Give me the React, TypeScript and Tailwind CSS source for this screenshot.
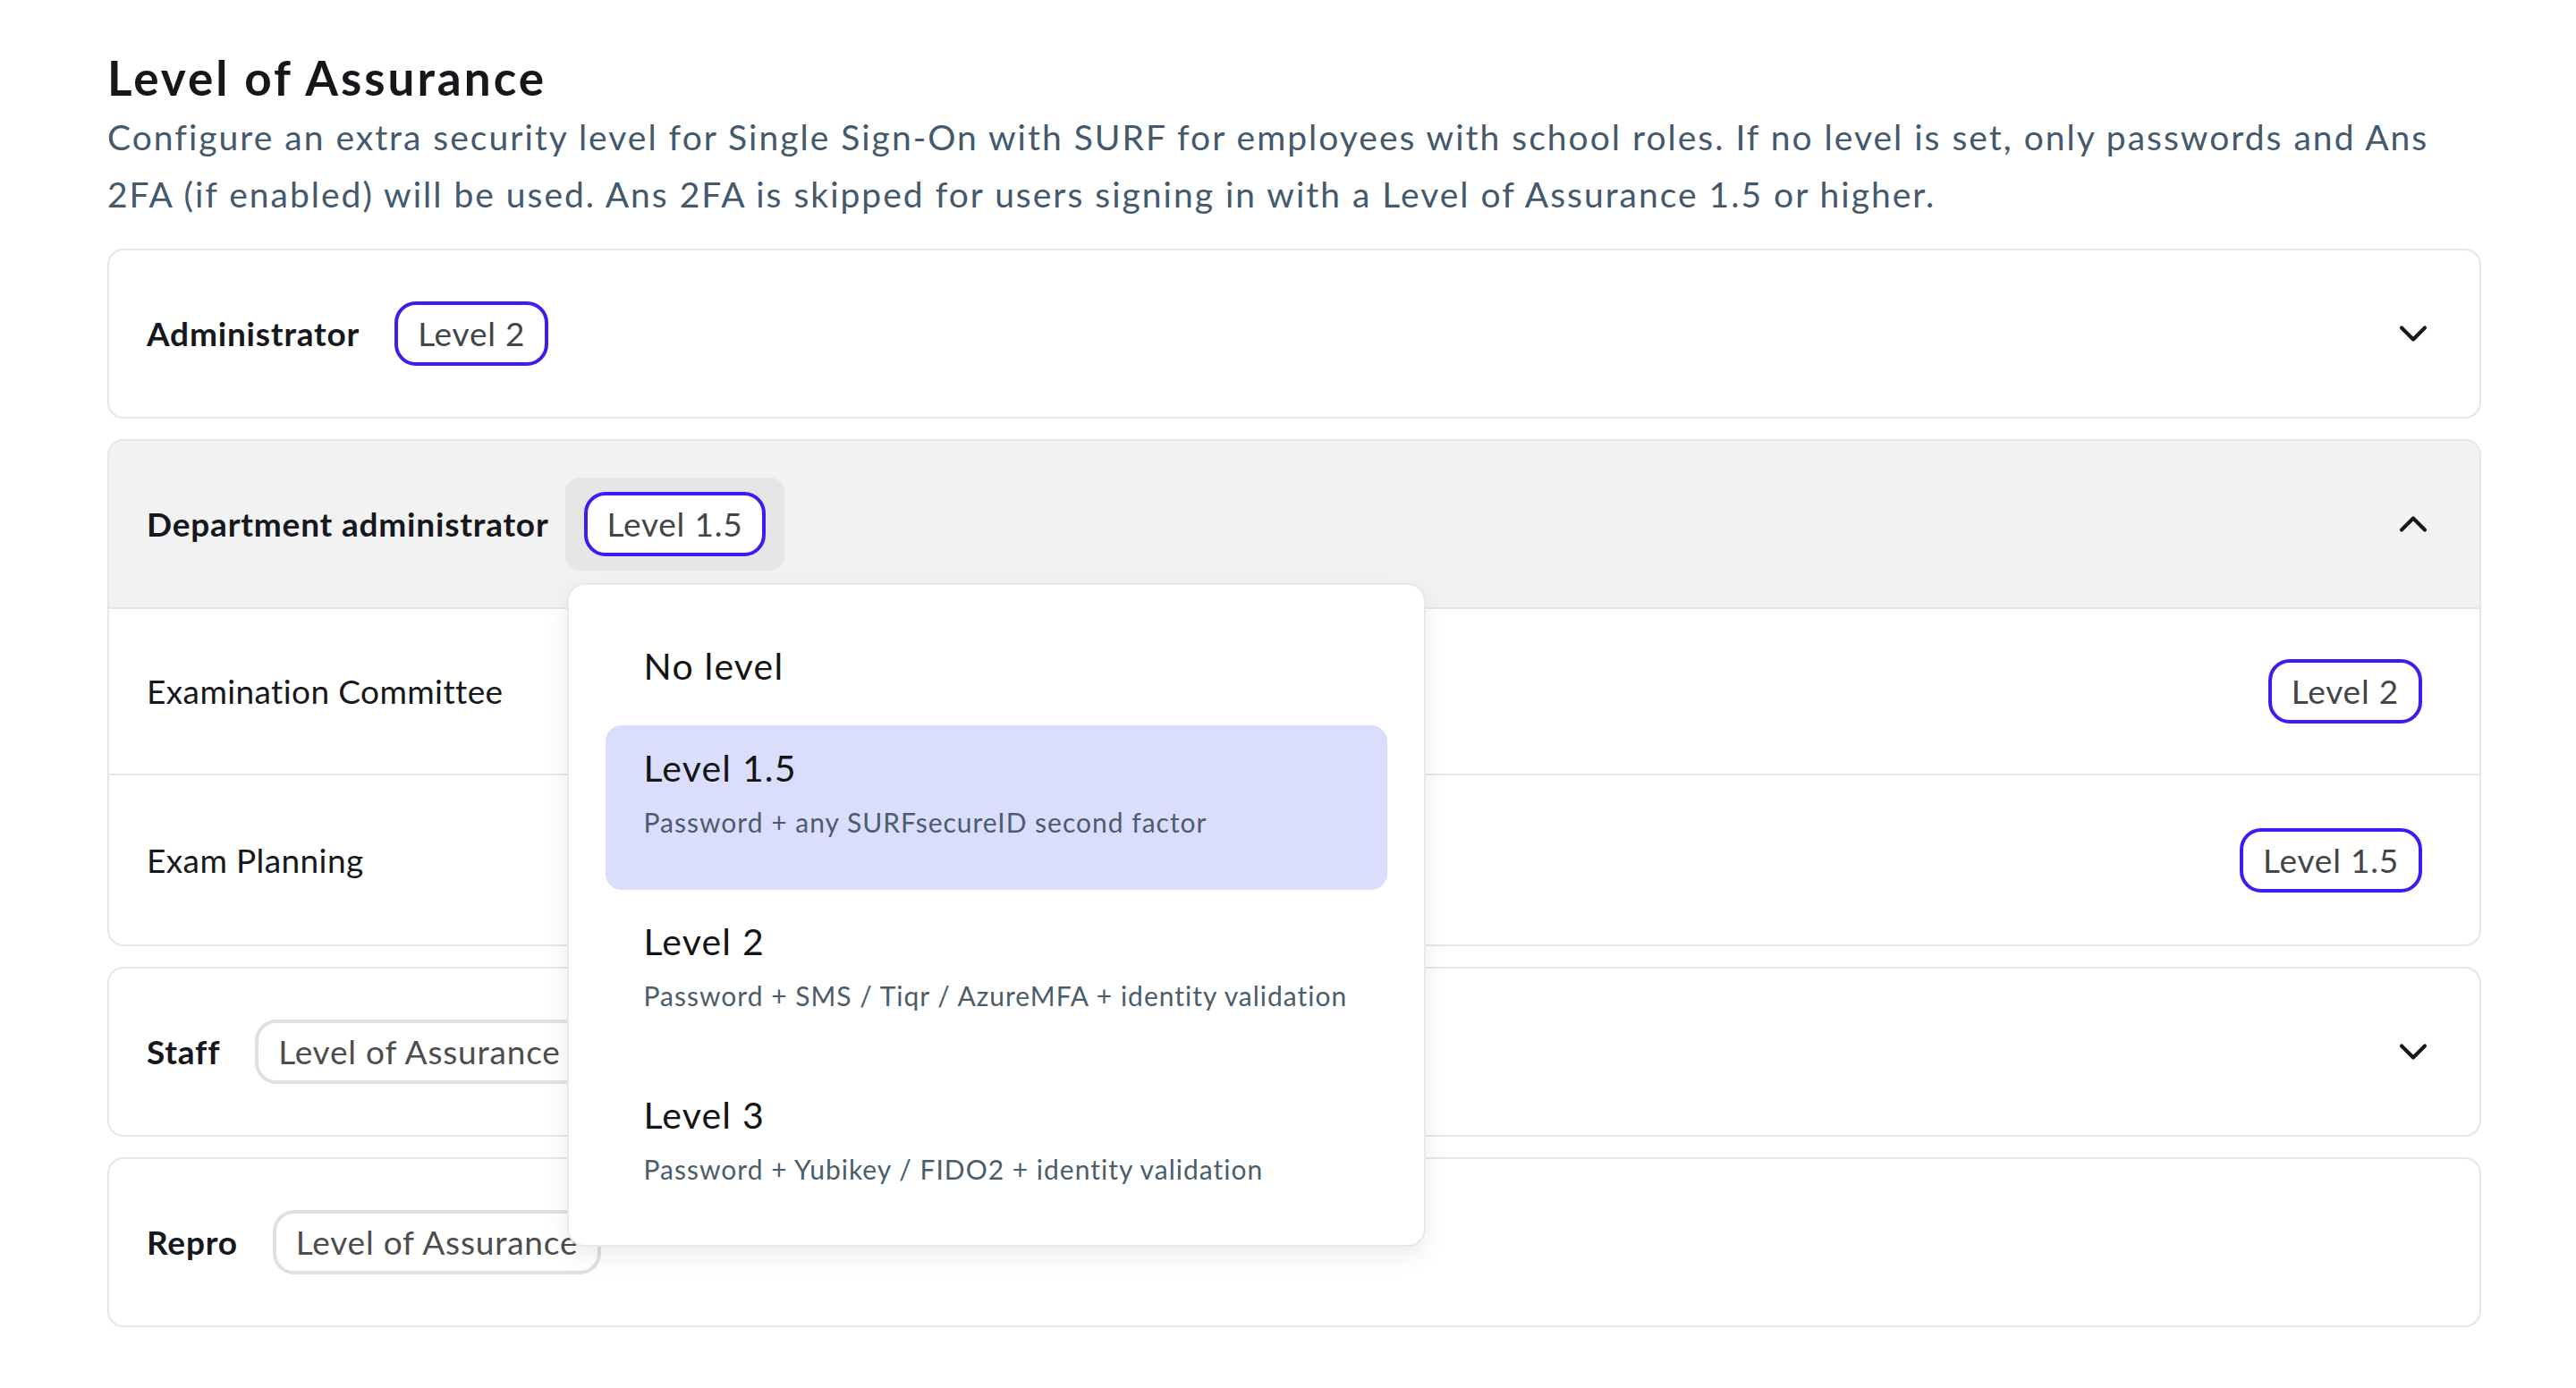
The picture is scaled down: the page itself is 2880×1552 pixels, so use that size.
import React from 'react';
import { ChevronDown, ChevronUp } from 'lucide-react';

// Level of Assurance settings: accordion of school roles with a level picker open on one of them

const options = [
  { label: 'Level 1.5', info: 'Password + any SURFsecureID second factor' },
  { label: 'Level 2', info: 'Password + SMS / Tiqr / AzureMFA + identity validation' },
  { label: 'Level 3', info: 'Password + Yubikey / FIDO2 + identity validation' },
];

function Badge({ label, set }: { label: string; set: boolean }) {
  return (
    <span
      className={
        set
          ? 'flex h-[72px] items-center whitespace-nowrap rounded-[24px] border-[4px] border-[#3b1cf2] bg-white px-[22px] text-[37px] leading-[44px] tracking-[0.8px] text-[#454545]'
          : 'flex h-[72px] items-center whitespace-nowrap rounded-[24px] border-[4px] border-[#e0e0e0] bg-white px-[22px] text-[37px] leading-[44px] tracking-[0.8px] text-[#4d4d4d]'
      }
    >
      {label}
    </span>
  );
}

function LevelMenu() {
  return (
    <div className="absolute left-[2px] top-[118px] z-10 flex w-[960px] flex-col gap-[10px] rounded-[20px] border-2 border-[#e8e8e8] bg-white px-[41px] pb-[9px] pt-[43px] shadow-[0_10px_28px_rgba(0,0,0,0.08)]">
      <div className="h-[104px] px-[43px] pt-[20px] text-[41px] leading-[56px] tracking-[1.2px] text-[#141414]">
        No level
      </div>
      {options.map((o, i) => (
        <div
          key={o.label}
          className={
            i === 0
              ? 'h-[184px] rounded-[18px] bg-[#dbddfc] px-[43px] pt-[20px]'
              : 'h-[184px] rounded-[18px] px-[43px] pt-[20px]'
          }
        >
          <div className="text-[41px] leading-[56px] tracking-[1.2px] text-[#141414]">{o.label}</div>
          <div className="mt-[10px] whitespace-nowrap text-[30px] leading-[44px] tracking-[1px] text-[#4b5d6b]">
            {o.info}
          </div>
        </div>
      ))}
    </div>
  );
}

function RoleHeader({
  name,
  level,
  open = false,
  active = false,
  chevron = true,
}: {
  name: string;
  level?: string;
  open?: boolean;
  active?: boolean;
  chevron?: boolean;
}) {
  return (
    <div
      className={
        open
          ? 'flex h-[186px] items-center rounded-t-[16px] bg-[#f2f2f2] pl-[42px] pr-[48px]'
          : 'flex h-[186px] items-center pl-[42px] pr-[48px]'
      }
    >
      <span className="whitespace-nowrap text-[37px] font-bold tracking-[0.8px] text-[#16181d]">{name}</span>
      <div
        className={
          active
            ? 'relative ml-[18px] rounded-[16px] bg-[#e6e6e6] px-[21px] py-[16px]'
            : 'relative ml-[18px] rounded-[16px] px-[21px] py-[16px]'
        }
      >
        <Badge label={level ?? 'Level of Assurance'} set={!!level} />
        {active && <LevelMenu />}
      </div>
      {chevron && (
        <div className="ml-auto text-[#16181d]">
          {open ? <ChevronUp size={52} strokeWidth={1.9} /> : <ChevronDown size={52} strokeWidth={1.9} />}
        </div>
      )}
    </div>
  );
}

function SubRole({ name, level, tall = false }: { name: string; level: string; tall?: boolean }) {
  return (
    <div
      className={
        tall
          ? 'flex h-[191px] items-center justify-between border-t-2 border-[#e6e6e6] pl-[42px] pr-[43px]'
          : 'flex h-[186px] items-center justify-between border-t-2 border-[#e6e6e6] pl-[42px] pr-[43px]'
      }
    >
      <span className="text-[37px] tracking-[0.4px] text-[#16181d]">{name}</span>
      <div className="px-[21px] py-[16px]">
        <Badge label={level} set />
      </div>
    </div>
  );
}

export default function App() {
  return (
    <div className="min-h-screen bg-white pl-[120px] pt-[56px] font-['Lato',sans-serif]">
      <h1 className="text-[53px] font-bold leading-[62px] tracking-[3px] text-[#15171a]">Level of Assurance</h1>
      <p className="mt-[3px] whitespace-nowrap text-[39px] leading-[64px] tracking-[2px] text-[#44596b]">
        Configure an extra security level for Single Sign-On with SURF for employees with school roles. If no level is
        set, only passwords and Ans
        <br />
        2FA (if enabled) will be used. Ans 2FA is skipped for users signing in with a Level of Assurance 1.5 or higher.
      </p>

      <div className="mt-[29px] flex w-[2654px] flex-col gap-[23px]">
        <div className="rounded-[18px] border-2 border-[#e6e6e6] bg-white">
          <RoleHeader name="Administrator" level="Level 2" />
        </div>

        <div className="rounded-[18px] border-2 border-[#e6e6e6] bg-white">
          <RoleHeader name="Department administrator" level="Level 1.5" open active />
          <SubRole name="Examination Committee" level="Level 2" />
          <SubRole name="Exam Planning" level="Level 1.5" tall />
        </div>

        <div className="rounded-[18px] border-2 border-[#e6e6e6] bg-white">
          <RoleHeader name="Staff" />
        </div>

        <div className="rounded-[18px] border-2 border-[#e6e6e6] bg-white">
          <RoleHeader name="Repro" chevron={false} />
        </div>
      </div>
    </div>
  );
}
